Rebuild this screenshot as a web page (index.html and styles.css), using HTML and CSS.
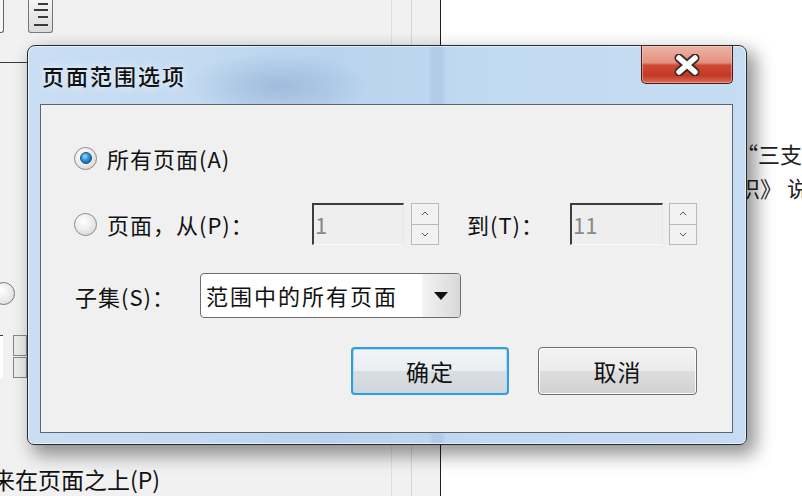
FILE: index.html
```html
<!DOCTYPE html>
<html lang="zh-CN">
<head>
    <meta charset="UTF-8">
    <title>页面范围选项</title>
    <link rel="stylesheet" href="styles.css">
</head>
<body>

<div class="desk">
    <div class="side">
        <div class="tool-row">
            <span class="tool-edge"></span>
            <button class="tool-btn">
                <svg width="16" height="28" viewBox="0 0 16 28">
                    <path d="M5 2h10M1 8h14M5 15h10M1 23h14" stroke="#3a3a3a" stroke-width="2" fill="none"/>
                </svg>
            </button>
        </div>
        <div class="side-rule"></div>
        <div class="side-radio"></div>
        <div class="side-field">
            <span class="side-input"></span>
            <span class="side-spin"><i></i><i></i></span>
        </div>
        <div class="side-label">来在页面之上(P)</div>
    </div>
    <div class="page">
        <p class="page-line">“三支持</p>
        <p class="page-line shift">识》 说明</p>
    </div>
</div>

<!-- dialog -->
<div class="dialog">
    <div class="titlebar">
        <span class="title">页面范围选项</span>
        <button class="close-btn">
            <svg width="28" height="22" viewBox="0 0 28 22">
                <path d="M6 4L22 18M22 4L6 18" stroke="#3b2a28" stroke-width="9" stroke-linecap="round"/>
                <path d="M6 4L22 18M22 4L6 18" stroke="#ffffff" stroke-width="5.5" stroke-linecap="round"/>
            </svg>
        </button>
    </div>

    <div class="client">
        <div class="row row-all">
            <span class="radio"><span class="radio-dot"></span></span>
            <span class="opt-text">所有页面(A)</span>
        </div>

        <div class="row row-range">
            <span class="radio"></span>
            <span class="opt-text from-label">页面，从(P)：</span>
            <span class="num num-from">1</span>
            <span class="spin spin-from">
                <i><svg width="8" height="5" viewBox="0 0 8 5"><path d="M1 4L4 1L7 4" stroke="#555" fill="none"/></svg></i>
                <i><svg width="8" height="5" viewBox="0 0 8 5"><path d="M1 1L4 4L7 1" stroke="#555" fill="none"/></svg></i>
            </span>
            <span class="to-label">到(T)：</span>
            <span class="num num-to">11</span>
            <span class="spin spin-to">
                <i><svg width="8" height="5" viewBox="0 0 8 5"><path d="M1 4L4 1L7 4" stroke="#555" fill="none"/></svg></i>
                <i><svg width="8" height="5" viewBox="0 0 8 5"><path d="M1 1L4 4L7 1" stroke="#555" fill="none"/></svg></i>
            </span>
        </div>

        <div class="row row-subset">
            <span class="subset-label">子集(S)：</span>
            <div class="combo">
                <span class="combo-text">范围中的所有页面</span>
                <span class="combo-arrow">
                    <svg width="14" height="8" viewBox="0 0 14 8"><path d="M0 0H14L7 8Z" fill="#111"/></svg>
                </span>
            </div>
        </div>

        <div class="actions">
            <button class="btn btn-ok">确定</button>
            <button class="btn btn-cancel">取消</button>
        </div>
    </div>
</div>

</body>
</html>
```

FILE: styles.css
```css
* {
    box-sizing: border-box;
}
body {
    margin: 0;
    width: 802px;
    height: 496px;
    overflow: hidden;
    position: relative;
    background-color: #fff;
    font-family: "Noto Sans CJK SC", "Noto Sans", sans-serif;
    color: #111;
}

/* background app */
.desk {
    display: grid;
    grid-template-columns: 441px 1fr;
    height: 496px;
}
.side {
    display: flex;
    flex-direction: column;
    overflow: hidden;
    border-right: 1px solid #1e1e1e;
    background:
        linear-gradient(90deg, transparent 391px, #dedede 391px, #dedede 392px, transparent 392px,
            transparent 411px, #d6d6d6 411px, #d6d6d6 412px, transparent 412px),
        #f1f1f1;
}
.tool-row {
    display: flex;
    height: 33px;
    flex: none;
}
.tool-edge {
    width: 4px;
    border-right: 1px solid #666;
    border-bottom: 1px solid #666;
    border-radius: 0 0 3px 0;
    background-color: #f8f8f8;
}
.tool-btn {
    margin-left: 24px;
    width: 25px;
    padding: 0;
    border: 1px solid #777;
    border-top: none;
    border-radius: 0 0 3px 3px;
    background: linear-gradient(#f5f5f5, #dcdcdc);
    display: flex;
    align-items: center;
    justify-content: center;
}
.side-rule {
    margin-top: 29px;
    height: 1px;
    flex: none;
    background-color: #3a3a3a;
}
.side-radio {
    margin-top: 219px;
    margin-left: -8px;
    width: 23px;
    height: 23px;
    flex: none;
    border-radius: 50%;
    border: 1px solid #777;
    background: radial-gradient(circle at 40% 35%, #fff, #d8d8d8);
}
.side-field {
    margin-top: 30px;
    height: 43px;
    flex: none;
    display: flex;
}
.side-input {
    width: 3px;
    background-color: #fff;
    border-top: 1px solid #333;
}
.side-spin {
    margin-left: 10px;
    width: 14px;
    display: flex;
    flex-direction: column;
    gap: 1px;
}
.side-spin i {
    flex: 1;
    border: 1px solid #888;
    background-color: #ececec;
}
.side-label {
    margin-top: 86px;
    margin-left: -8px;
    font-size: 23px;
    line-height: 30px;
    white-space: nowrap;
}
.page {
    padding: 136px 0 0 295px;
    overflow: hidden;
    white-space: nowrap;
    font-size: 22px;
    line-height: 34px;
    color: #222;
}
.page-line {
    margin: 0;
}
.page-line.shift {
    margin-left: 2px;
}

/* dialog window */
.dialog {
    position: absolute;
    left: 27px;
    top: 45px;
    width: 720px;
    height: 400px;
    display: flex;
    flex-direction: column;
    border: 1px solid #262a30;
    border-radius: 8px 8px 7px 7px;
    background:
        radial-gradient(ellipse 90px 34px at 250px 40px, rgba(110,145,188,0.38), rgba(110,145,188,0)),
        linear-gradient(90deg, rgba(150,180,215,0) 400px, rgba(150,180,215,0.35) 405px,
            rgba(150,180,215,0.35) 413px, rgba(150,180,215,0) 418px),
        linear-gradient(90deg, #c9def3 0, #c3daf1 170px, #b9d3ee 300px, #c1d9f1 460px, #c6dcf3 720px);
    box-shadow: inset 0 0 0 1px rgba(255,255,255,0.6), 7px 8px 18px 2px rgba(0,0,0,0.42);
}
.titlebar {
    display: flex;
    height: 58px;
    flex: none;
    padding-left: 14px;
}
.title {
    align-self: center;
    font-size: 22px;
    font-weight: 500;
    letter-spacing: 2px;
    color: #111;
    text-shadow: 0 0 8px rgba(255,255,255,0.9);
}
.close-btn {
    margin-left: auto;
    margin-right: 13px;
    width: 92px;
    height: 38px;
    padding: 0;
    border: 1px solid #4a1a14;
    border-top: none;
    border-radius: 0 0 5px 5px;
    background: linear-gradient(#ebb4a7 0%, #e3917f 45%, #cc4a34 52%, #c43a25 80%, #d96d57 100%);
    box-shadow: inset 0 0 0 1px rgba(255,215,205,0.45);
    display: flex;
    align-items: center;
    justify-content: center;
}
.client {
    margin: 0 13px 0 12px;
    height: 329px;
    flex: none;
    display: flex;
    flex-direction: column;
    padding: 30px 35px 0 33px;
    border: 1px solid #5b6470;
    background-color: #f0f0f0;
}
.row {
    display: flex;
    align-items: center;
    flex: none;
}
.row-all {
    height: 46px;
}
.row-range {
    height: 42px;
    margin-top: 22px;
}
.row-subset {
    height: 45px;
    margin-top: 28px;
}
.radio {
    width: 23px;
    height: 23px;
    flex: none;
    display: flex;
    align-items: center;
    justify-content: center;
    border-radius: 50%;
    border: 1px solid #8b8b8b;
    background: radial-gradient(circle at 40% 35%, #fff 0, #f0f0f0 40%, #cdcdcd 100%);
}
.radio-dot {
    width: 12px;
    height: 12px;
    border-radius: 50%;
    border: 1px solid #134c82;
    background: radial-gradient(circle at 40% 35%, #9ad8fb 0, #2c90d7 45%, #0c4f95 100%);
}
.opt-text {
    margin-left: 10px;
    font-size: 22px;
    letter-spacing: 1px;
}
.from-label {
    width: 205px;
    flex: none;
}
.num {
    height: 42px;
    flex: none;
    padding-left: 1px;
    border-top: 2px solid #3d3d3d;
    border-left: 2px solid #3d3d3d;
    border-right: 1px solid #e6e6e6;
    border-bottom: 1px solid #f8f8f8;
    background-color: #eeeeee;
    color: #8a8a8a;
    font-size: 22px;
    line-height: 38px;
}
.num-from {
    width: 92px;
}
.num-to {
    width: 93px;
}
.spin {
    width: 28px;
    height: 42px;
    flex: none;
    display: flex;
    flex-direction: column;
    border: 1px solid #b9b9b9;
    background-color: #f2f2f2;
}
.spin i {
    flex: 1;
    display: flex;
    align-items: center;
    justify-content: center;
}
.spin i + i {
    border-top: 1px solid #b9b9b9;
}
.spin-from {
    margin-left: 7px;
}
.spin-to {
    margin-left: 6px;
}
.to-label {
    margin-left: 28px;
    width: 103px;
    flex: none;
    font-size: 22px;
    letter-spacing: 1px;
}
.subset-label {
    margin-left: 1px;
    width: 125px;
    flex: none;
    font-size: 22px;
    letter-spacing: 1px;
}
.combo {
    width: 261px;
    height: 45px;
    display: flex;
    overflow: hidden;
    border: 1px solid #6d6d6d;
    border-radius: 4px;
    background-color: #fff;
}
.combo-text {
    flex: 1;
    padding-left: 5px;
    font-size: 22px;
    letter-spacing: 2px;
    line-height: 43px;
    white-space: nowrap;
}
.combo-arrow {
    width: 38px;
    flex: none;
    display: flex;
    align-items: center;
    justify-content: center;
    background: linear-gradient(90deg, #f4f4f4, #d8d8d8);
}
.actions {
    display: flex;
    justify-content: flex-end;
    margin-top: 29px;
}
.btn {
    height: 48px;
    padding: 0;
    font-family: inherit;
    font-size: 23px;
    letter-spacing: 1px;
    color: #111;
    border: 1px solid #707070;
    border-radius: 4px;
    background: linear-gradient(#f3f3f3 0%, #ebebeb 49%, #dddddd 51%, #d1d1d1 100%);
    box-shadow: inset 0 0 0 1px #fbfbfb;
}
.btn-ok {
    width: 158px;
    margin-right: 29px;
    border: 2px solid #3a9ad6;
    box-shadow: inset 0 0 0 1px #a9e0fb;
    background: linear-gradient(#f2f5f7 0%, #eaeef1 49%, #d9dee2 51%, #cfd6db 100%);
}
.btn-cancel {
    width: 159px;
}
```
